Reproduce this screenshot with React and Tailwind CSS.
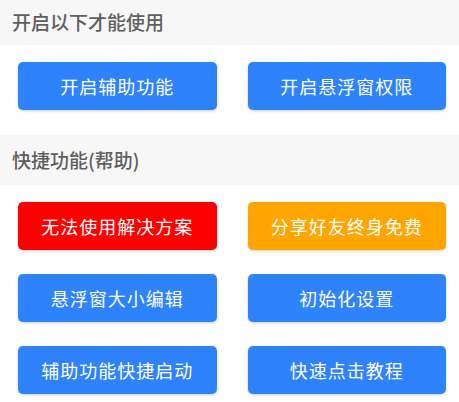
import React from 'react';

const sections = [
  {
    title: '开启以下才能使用',
    height: 'h-[45px]',
    buttons: [
      { text: '开启辅助功能', color: 'bg-[#2e83fd]' },
      { text: '开启悬浮窗权限', color: 'bg-[#2e83fd]' },
    ],
  },
  {
    title: '快捷功能(帮助)',
    height: 'h-[50px]',
    buttons: [
      { text: '无法使用解决方案', color: 'bg-[#ff0000]' },
      { text: '分享好友终身免费', color: 'bg-[#ffa500]' },
      { text: '悬浮窗大小编辑', color: 'bg-[#2e83fd]' },
      { text: '初始化设置', color: 'bg-[#2e83fd]' },
      { text: '辅助功能快捷启动', color: 'bg-[#2e83fd]' },
      { text: '快速点击教程', color: 'bg-[#2e83fd]' },
    ],
  },
];

const App = () => {
  return (
    <div
      className="w-[459px] h-[402px] bg-white overflow-hidden"
      style={{ fontFamily: '"Noto Sans CJK SC", Roboto, sans-serif' }}
    >
      {sections.map((section, i) => (
        <div key={section.title} className={i > 0 ? 'mt-[25px]' : ''}>
          <div className={`bg-[#f7f7f7] ${section.height} flex items-center pl-[12px] text-[19px] font-medium text-[#5f5f5f]`}>
            {section.title}
          </div>
          <div className="grid grid-cols-2 gap-y-[24px] pt-[17px]">
            {section.buttons.map((btn) => (
              <div key={btn.text} className="pl-[18px] pr-[13px]">
                <button
                  className={`w-full h-[48px] rounded-[5px] text-white text-[18px] tracking-[1px] shadow-[0_1px_3px_rgba(0,0,0,0.2)] ${btn.color}`}
                >
                  {btn.text}
                </button>
              </div>
            ))}
          </div>
        </div>
      ))}
    </div>
  );
};

export default App;
